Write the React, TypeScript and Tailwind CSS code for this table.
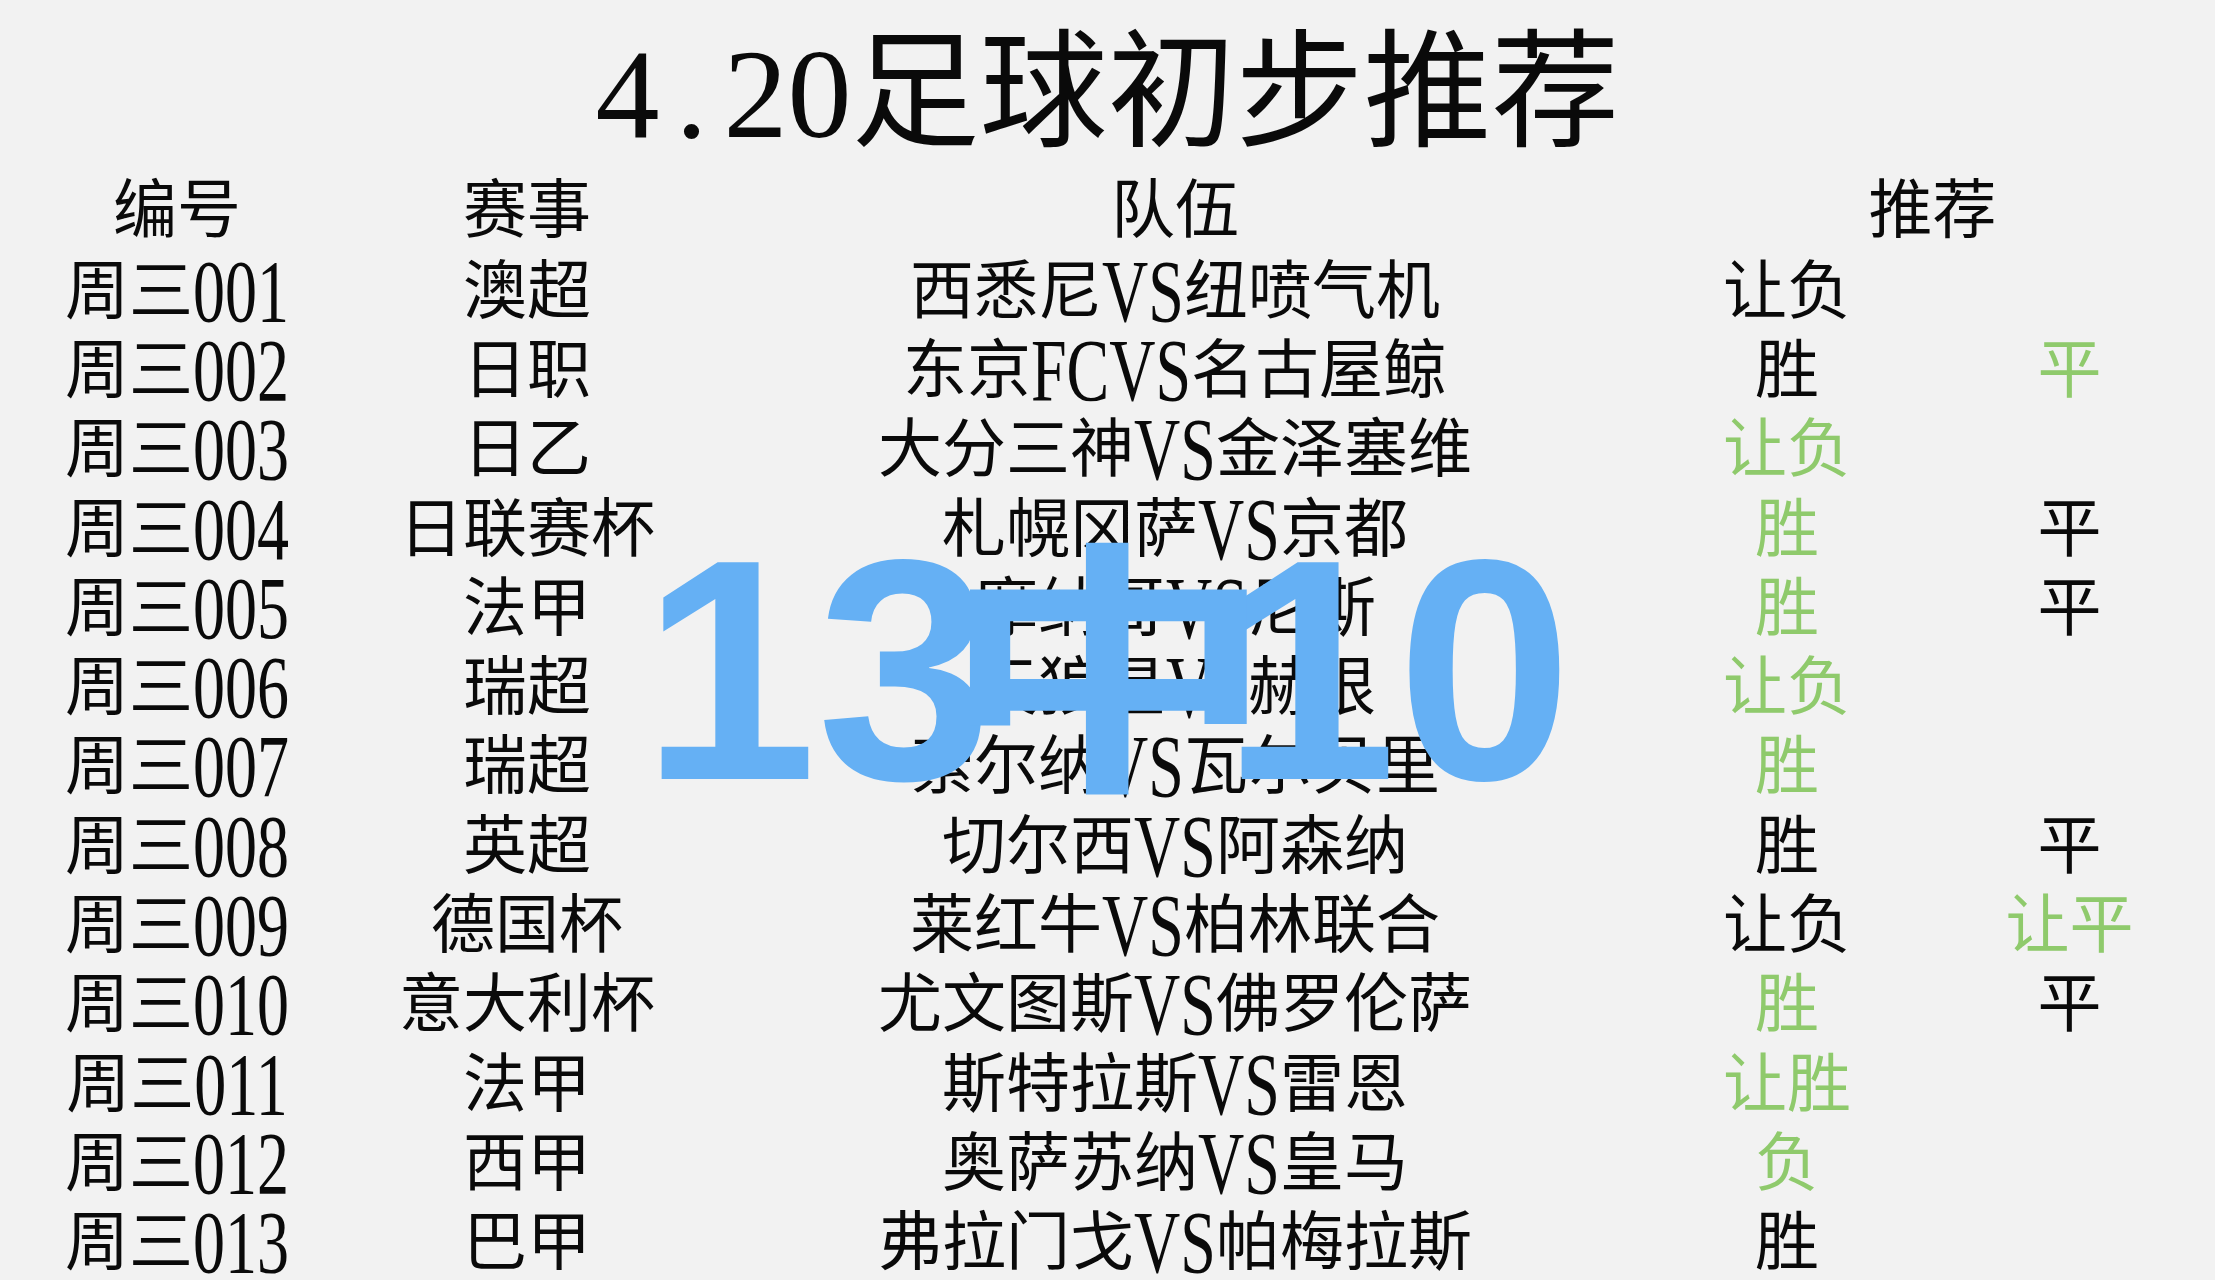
import React from 'react'

type Row = {
  id: string
  league: string
  teams: string
  pick: string
  pickGreen: boolean
  extra?: string
  extraGreen?: boolean
}

const ROWS: Row[] = [
  { id: '周三001', league: '澳超', teams: '西悉尼VS纽喷气机', pick: '让负', pickGreen: false },
  { id: '周三002', league: '日职', teams: '东京FCVS名古屋鲸', pick: '胜', pickGreen: false, extra: '平', extraGreen: true },
  { id: '周三003', league: '日乙', teams: '大分三神VS金泽塞维', pick: '让负', pickGreen: true },
  { id: '周三004', league: '日联赛杯', teams: '札幌冈萨VS京都', pick: '胜', pickGreen: true, extra: '平', extraGreen: false },
  { id: '周三005', league: '法甲', teams: '摩纳哥VS尼斯', pick: '胜', pickGreen: true, extra: '平', extraGreen: false },
  { id: '周三006', league: '瑞超', teams: '天狼星VS赫根', pick: '让负', pickGreen: true },
  { id: '周三007', league: '瑞超', teams: '索尔纳VS瓦尔贝里', pick: '胜', pickGreen: true },
  { id: '周三008', league: '英超', teams: '切尔西VS阿森纳', pick: '胜', pickGreen: false, extra: '平', extraGreen: false },
  { id: '周三009', league: '德国杯', teams: '莱红牛VS柏林联合', pick: '让负', pickGreen: false, extra: '让平', extraGreen: true },
  { id: '周三010', league: '意大利杯', teams: '尤文图斯VS佛罗伦萨', pick: '胜', pickGreen: true, extra: '平', extraGreen: false },
  { id: '周三011', league: '法甲', teams: '斯特拉斯VS雷恩', pick: '让胜', pickGreen: true },
  { id: '周三012', league: '西甲', teams: '奥萨苏纳VS皇马', pick: '负', pickGreen: true },
  { id: '周三013', league: '巴甲', teams: '弗拉门戈VS帕梅拉斯', pick: '胜', pickGreen: false },
]

// Latin runs in the sheet font are tall and narrow, so stretch them vertically.
function Tall({ text }: { text: string }) {
  const parts = text.match(/[\x00-\x7f]+|[^\x00-\x7f]+/g) ?? []
  return (
    <>
      {parts.map((p, i) =>
        /[\x00-\x7f]/.test(p) ? (
          <span key={i} className="inline-block leading-none scale-y-[1.4]">
            {p}
          </span>
        ) : (
          <span key={i}>{p}</span>
        ),
      )}
    </>
  )
}

const cell = 'flex items-center justify-center whitespace-nowrap'

export default function App() {
  return (
    <div className="relative h-[1280px] w-full overflow-hidden bg-[#f2f2f2] font-['Liberation_Serif','Noto_Sans_CJK_SC',serif] text-[#0a0a0a]">
      <div className="flex h-[170px] items-center justify-center pt-[18px] text-[128px] leading-none">
        <span>4</span>
        <span className="inline-block w-[0.5em] text-center">.</span>
        <span>20足球初步推荐</span>
      </div>

      <div className="grid grid-cols-[354px_346px_950px_274px_1fr] text-[64px] leading-none">
        <div className={`${cell} h-[82px]`}>编号</div>
        <div className={`${cell} h-[82px]`}>赛事</div>
        <div className={`${cell} h-[82px]`}>队伍</div>
        <div className={`${cell} col-span-2 h-[82px]`}>推荐</div>

        {ROWS.map((r) => (
          <React.Fragment key={r.id}>
            <div className={`${cell} h-[79.3px]`}>
              <Tall text={r.id} />
            </div>
            <div className={`${cell} h-[79.3px]`}>{r.league}</div>
            <div className={`${cell} h-[79.3px]`}>
              <Tall text={r.teams} />
            </div>
            <div className={`${cell} h-[79.3px] ${r.pickGreen ? 'text-[#8fca6c]' : ''}`}>{r.pick}</div>
            <div className={`${cell} h-[79.3px] ${r.extraGreen ? 'text-[#8fca6c]' : ''}`}>{r.extra ?? ''}</div>
          </React.Fragment>
        ))}
      </div>

      {/* 13中10 stamp over the table */}
      <div className="pointer-events-none absolute inset-0 text-[#65b0f4]">
        <div className="absolute left-[817px] top-[513px] -translate-x-1/2 font-['Liberation_Sans',sans-serif] text-[315px] font-bold leading-none">
          13
        </div>
        <div className="absolute left-[1397px] top-[513px] -translate-x-1/2 font-['Liberation_Sans',sans-serif] text-[315px] font-bold leading-none">
          10
        </div>
        <div className="absolute left-[1108px] top-[486px] -translate-x-1/2 scale-y-[0.8] font-['Noto_Sans_CJK_SC',sans-serif] text-[335px] font-bold leading-none">
          中
        </div>
      </div>
    </div>
  )
}
